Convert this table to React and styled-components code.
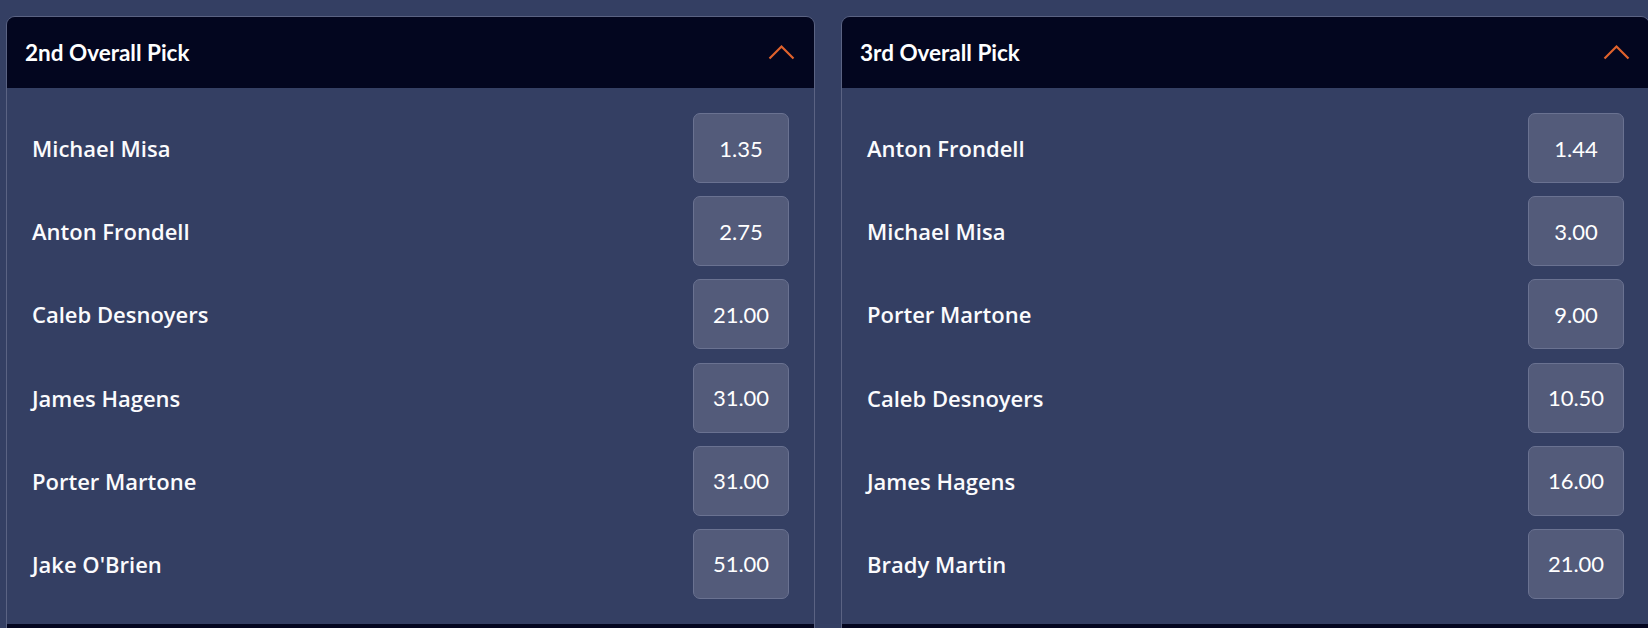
import React from "react";
import styled, { createGlobalStyle } from "styled-components";

const Global = createGlobalStyle`
  html, body {
    margin: 0;
    padding: 0;
    background: #343f63;
    height: 628px;
    overflow: hidden;
  }
  body {
    font-family: "Open Sans", "Liberation Sans", sans-serif;
  }
`;

const Page = styled.div`
  display: grid;
  grid-template-columns: 809px 809px;
  column-gap: 26px;
  align-items: start;
  padding: 16px 0 0 6px;
  height: 628px;
  box-sizing: border-box;
  overflow: hidden;
`;

const Card = styled.section`
  border: 1px solid #5b6383;
  border-radius: 9px;
  overflow: hidden;
  background: #343f63;
  display: flex;
  flex-direction: column;
`;

const Header = styled.div`
  height: 71px;
  flex: none;
  background: #03061f;
  display: flex;
  align-items: center;
  justify-content: space-between;
  padding: 0 19px 0 18px;
`;

const Title = styled.h2`
  margin: 0;
  font-family: Lato, "Liberation Sans", sans-serif;
  font-weight: 700;
  font-size: 22.5px;
  color: #ffffff;
  letter-spacing: 0;
`;

const Chevron = styled.svg`
  width: 27px;
  height: 16px;
  display: block;
  margin-top: -2px;
`;

const Body = styled.div`
  display: flex;
  flex-direction: column;
  gap: 13.2px;
  padding: 25px 25px 25px 25px;
`;

const Row = styled.div`
  display: flex;
  align-items: center;
  justify-content: space-between;
  height: 70px;
`;

const Name = styled.span`
  font-family: "Open Sans", "Liberation Sans", sans-serif;
  font-weight: 600;
  font-size: 22px;
  color: #fbfbfd;
`;

const Odds = styled.button`
  width: 96px;
  height: 70px;
  box-sizing: border-box;
  border: 1px solid #6a7291;
  border-radius: 7px;
  background: #535b7a;
  color: #ffffff;
  font-family: Lato, "Liberation Sans", sans-serif;
  font-weight: 400;
  font-size: 22px;
  display: flex;
  align-items: center;
  justify-content: center;
  padding: 0;
  cursor: pointer;
`;

const ChevronUp = () => (
  <Chevron viewBox="0 0 27 16" fill="none">
    <path d="M1.5 14.5 L13.5 2.5 L25.5 14.5" stroke="#e0622c" strokeWidth="2.2" />
  </Chevron>
);

const markets = [
  {
    title: "2nd Overall Pick",
    rows: [
      ["Michael Misa", "1.35"],
      ["Anton Frondell", "2.75"],
      ["Caleb Desnoyers", "21.00"],
      ["James Hagens", "31.00"],
      ["Porter Martone", "31.00"],
      ["Jake O'Brien", "51.00"],
    ],
  },
  {
    title: "3rd Overall Pick",
    rows: [
      ["Anton Frondell", "1.44"],
      ["Michael Misa", "3.00"],
      ["Porter Martone", "9.00"],
      ["Caleb Desnoyers", "10.50"],
      ["James Hagens", "16.00"],
      ["Brady Martin", "21.00"],
    ],
  },
];

export default function App() {
  return (
    <>
      <Global />
      <Page>
        {markets.map((m) => (
          <Card key={m.title}>
            <Header>
              <Title>{m.title}</Title>
              <ChevronUp />
            </Header>
            <Body>
              {m.rows.map(([name, odds]) => (
                <Row key={name}>
                  <Name>{name}</Name>
                  <Odds>{odds}</Odds>
                </Row>
              ))}
            </Body>
            <Header />
          </Card>
        ))}
      </Page>
    </>
  );
}
